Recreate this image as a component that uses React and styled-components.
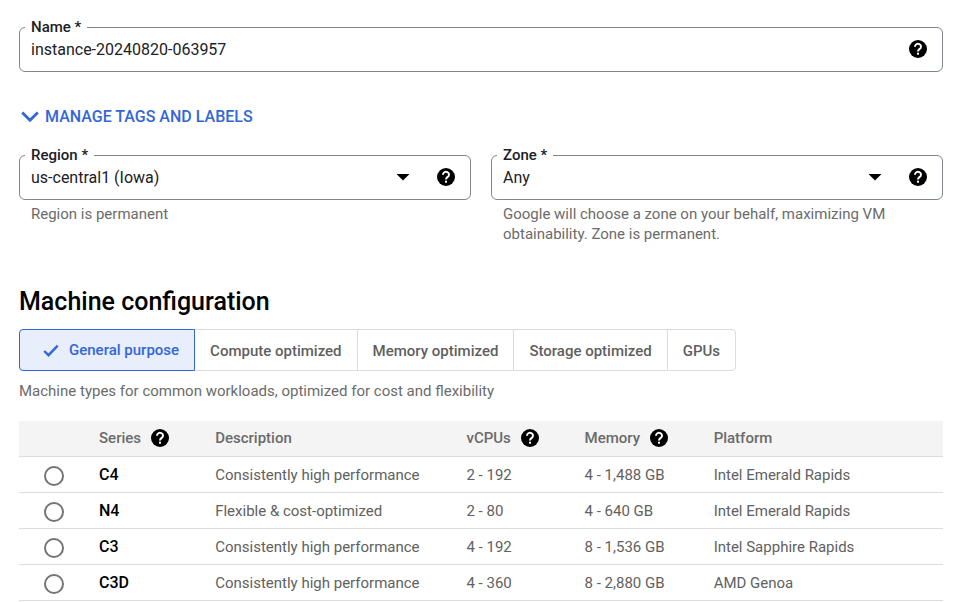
import React, { useId, useState } from "react";
import styled, { createGlobalStyle } from "styled-components";

const GlobalStyle = createGlobalStyle`
  *, *::before, *::after { box-sizing: border-box; }
  body {
    margin: 0;
    background: #fff;
    color: #202124;
    font-family: Roboto, "Liberation Sans", sans-serif;
    font-size: 15px;
    line-height: 20px;
  }
  button, input, select { font: inherit; color: inherit; }
`;

const Page = styled.main`
  display: flex;
  flex-direction: column;
  padding: 19px 13px 0 19px;
`;

const FieldBlock = styled.div`
  min-width: 0;
`;

const Outline = styled.fieldset`
  min-width: 0;
  margin: 0;
  padding: 0 14px 8px 5px;
  border: 1px solid #80868b;
  border-radius: 6px;
`;

const FieldLegend = styled.legend`
  padding: 0 6px;
  font-size: 15px;
  font-weight: 500;
  line-height: 16px;
`;

const ControlRow = styled.div`
  display: flex;
  align-items: center;
  height: 28px;
  padding-left: 6px;
`;

const TextInput = styled.input`
  flex: 1;
  min-width: 0;
  padding: 2px 0 0;
  border: 0;
  outline: 0;
  background: transparent;
  font-size: 16px;
`;

const Dropdown = styled.div`
  display: grid;
  flex: 1;
  align-items: center;
  min-width: 0;
  margin-right: 24px;

  & > * { grid-area: 1 / 1; }
  & > svg { justify-self: end; pointer-events: none; }
`;

const SelectBox = styled.select`
  appearance: none;
  width: 100%;
  padding: 2px 0 0;
  border: 0;
  outline: 0;
  background: transparent;
  font-size: 16px;
`;

const Hint = styled.p`
  margin: 0;
  padding: 4px 12px 0;
  color: #6b6b6b;
`;

const FieldPair = styled.div`
  display: grid;
  grid-template-columns: 1fr 1fr;
  gap: 20px;
`;

const IconButton = styled.button`
  display: inline-flex;
  flex: none;
  padding: 0;
  border: 0;
  background: none;
  color: #000;
  cursor: pointer;
`;

const ExpandButton = styled.button`
  display: inline-flex;
  align-items: center;
  align-self: flex-start;
  gap: 6px;
  margin: 35px 0 20px;
  padding: 0 0 0 2px;
  border: 0;
  background: none;
  color: #3367d6;
  font-size: 16px;
  font-weight: 500;
  cursor: pointer;
`;

const Heading = styled.h2`
  margin: 42px 0 11px;
  color: #000;
  font-size: 25px;
  font-weight: 500;
  line-height: 32px;
`;

const Tabs = styled.div`
  display: flex;
  align-self: flex-start;
`;

const Tab = styled.button`
  display: flex;
  align-items: center;
  gap: 10px;
  height: 42px;
  margin-left: -1px;
  padding: 2px 15px 0;
  border: 1px solid #dadce0;
  background: #fff;
  color: #5f5f5f;
  font-weight: 500;
  white-space: nowrap;
  cursor: pointer;

  &:first-child { margin-left: 0; border-radius: 4px 0 0 4px; }
  &:last-child { border-radius: 0 4px 4px 0; }
  &[aria-selected="true"] {
    z-index: 1;
    padding: 0 15px 0 23px;
    border-color: #3367d6;
    background: #e8eefb;
    color: #3367d6;
  }
`;

const Summary = styled.p`
  margin: 10px 0 20px;
  color: #6b6b6b;
`;

const Table = styled.table`
  width: 100%;
  table-layout: fixed;
  border-collapse: collapse;
  color: #616161;
`;

const Col = styled.col`
  width: ${(p) => p.$share}%;
`;

const HeadCell = styled.th`
  height: 35px;
  padding: 0;
  border-bottom: 1px solid #dadce0;
  background: #f4f4f4;
  color: #6b6b6b;
  font-weight: 500;
  text-align: left;
`;

const HeadLabel = styled.span`
  display: flex;
  align-items: center;
  gap: 9px;
`;

const Cell = styled.td`
  height: 36px;
  padding: 2px 0 0;
  border-bottom: 1px solid #dadce0;
  white-space: nowrap;
`;

const SeriesCell = styled(Cell)`
  color: #000;
  font-size: 16px;
  font-weight: 500;
`;

const Radio = styled.input`
  appearance: none;
  display: block;
  width: 20px;
  height: 20px;
  margin: 2px 0 0 25px;
  border: 2px solid #757575;
  border-radius: 50%;
  background: #fff;
  cursor: pointer;

  &:checked { border-color: #3367d6; background: radial-gradient(#3367d6 5px, #fff 6px); }
`;

function HelpButton({ label }) {
  return (
    <IconButton type="button" aria-label={label}>
      <svg width="20" height="20" viewBox="0 0 20 20" aria-hidden="true">
        <circle cx="10" cy="10" r="9" fill="currentColor" />
        <path d="M7 7.700a3 2.800 0 1 1 4.700 2.200c-1 .8-1.700 1.200-1.700 2.600" fill="none" stroke="#fff" strokeWidth="2" />
        <rect x="9" y="13.700" width="2" height="2" fill="#fff" />
      </svg>
    </IconButton>
  );
}

function Field({ label, hint, children }) {
  const id = useId();
  return (
    <FieldBlock>
      <Outline>
        <FieldLegend><label htmlFor={id}>{label} *</label></FieldLegend>
        <ControlRow>
          {children(id)}
          <HelpButton label={`Help for ${label}`} />
        </ControlRow>
      </Outline>
      {hint && <Hint>{hint}</Hint>}
    </FieldBlock>
  );
}

function SelectField({ label, hint, option }) {
  return (
    <Field label={label} hint={hint}>
      {(id) => (
        <Dropdown>
          <SelectBox id={id}><option>{option}</option></SelectBox>
          <svg width="18" height="18" viewBox="0 0 18 18" aria-hidden="true">
            <path d="M2.500 6h13L9 12.500z" fill="#000" />
          </svg>
        </Dropdown>
      )}
    </Field>
  );
}

const families = ["General purpose", "Compute optimized", "Memory optimized", "Storage optimized", "GPUs"];

const columns = [
  { share: 8.66 },
  { share: 12.57, label: "Series", help: true },
  { share: 27.2, label: "Description" },
  { share: 12.78, label: "vCPUs", help: true },
  { share: 13.97, label: "Memory", help: true },
  { share: 24.82, label: "Platform" },
];

const machines = [
  ["C4", "Consistently high performance", "2 - 192", "4 - 1,488 GB", "Intel Emerald Rapids"],
  ["N4", "Flexible & cost-optimized", "2 - 80", "4 - 640 GB", "Intel Emerald Rapids"],
  ["C3", "Consistently high performance", "4 - 192", "8 - 1,536 GB", "Intel Sapphire Rapids"],
  ["C3D", "Consistently high performance", "4 - 360", "8 - 2,880 GB", "AMD Genoa"],
];

export default function App() {
  const [family, setFamily] = useState(families[0]);
  return (
    <Page>
      <GlobalStyle />
      <Field label="Name">
        {(id) => <TextInput id={id} defaultValue="instance-20240820-063957" />}
      </Field>

      <ExpandButton type="button">
        <svg width="18" height="12" viewBox="0 0 18 12" aria-hidden="true">
          <path d="M1.200 1.500 9 9.300l7.800-7.800" fill="none" stroke="currentColor" strokeWidth="2.800" />
        </svg>
        MANAGE TAGS AND LABELS
      </ExpandButton>

      <FieldPair>
        <SelectField label="Region" option="us-central1 (Iowa)" hint="Region is permanent" />
        <SelectField
          label="Zone"
          option="Any"
          hint="Google will choose a zone on your behalf, maximizing VM obtainability. Zone is permanent."
        />
      </FieldPair>

      <Heading>Machine configuration</Heading>
      <Tabs role="tablist">
        {families.map((name) => (
          <Tab key={name} type="button" role="tab" aria-selected={name === family} onClick={() => setFamily(name)}>
            {name === family && (
              <svg width="16" height="14" viewBox="0 0 16 14" aria-hidden="true">
                <path d="M1.200 8 5.500 12.200 14.700 2.700" fill="none" stroke="currentColor" strokeWidth="2.400" />
              </svg>
            )}
            {name}
          </Tab>
        ))}
      </Tabs>
      <Summary>Machine types for common workloads, optimized for cost and flexibility</Summary>

      <Table>
        <colgroup>
          {columns.map((c, i) => <Col key={i} $share={c.share} />)}
        </colgroup>
        <thead>
          <tr>
            {columns.map((c, i) => (
              <HeadCell key={i} scope="col">
                {c.label && (
                  <HeadLabel>
                    {c.label}
                    {c.help && <HelpButton label={`Help for ${c.label}`} />}
                  </HeadLabel>
                )}
              </HeadCell>
            ))}
          </tr>
        </thead>
        <tbody>
          {machines.map(([series, ...details]) => (
            <tr key={series}>
              <Cell><Radio type="radio" name="series" id={`series-${series}`} /></Cell>
              <SeriesCell><label htmlFor={`series-${series}`}>{series}</label></SeriesCell>
              {details.map((text, i) => <Cell key={i}>{text}</Cell>)}
            </tr>
          ))}
        </tbody>
      </Table>
    </Page>
  );
}
